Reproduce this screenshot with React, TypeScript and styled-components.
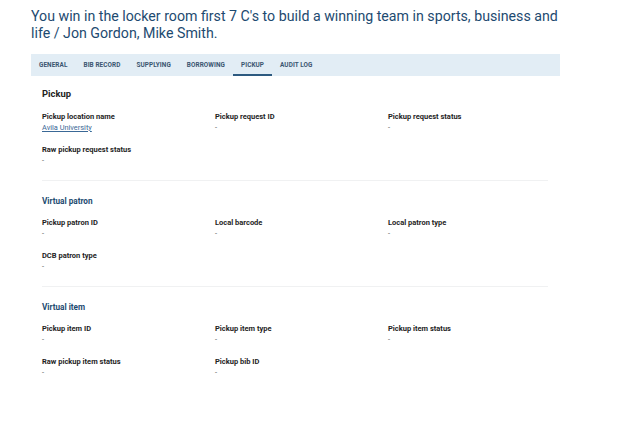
import React from "react";
import styled, { createGlobalStyle } from "styled-components";

const GlobalStyle = createGlobalStyle`
  html, body {
    margin: 0;
    padding: 0;
    background: #ffffff;
    font-family: Roboto, "Liberation Sans", Arial, sans-serif;
  }
`;

const Page = styled.div`
  width: 529px;
  padding: 8px 31px 0 31px;
`;

const Title = styled.h1`
  margin: 0;
  font-size: 14.2px;
  line-height: 17px;
  font-weight: 400;
  color: #1d4a70;
`;

const TabBar = styled.nav`
  display: flex;
  margin-top: 12px;
  height: 22px;
  background: #e2edf5;
`;

const Tab = styled.div<{ $active?: boolean }>`
  display: flex;
  align-items: center;
  padding: 1px 8px 0 8px;
  font-size: 6.4px;
  font-weight: 700;
  letter-spacing: 0.08px;
  color: #3a5570;
  text-transform: uppercase;
  box-sizing: border-box;
  border-bottom: 2px solid ${(p) => (p.$active ? "#2d5a80" : "transparent")};
`;

const Panel = styled.div`
  padding: 12px 12px 0 11px;
`;

const Section = styled.section<{ $last?: boolean }>`
  padding-bottom: 14px;
  border-bottom: 1px solid ${(p) => (p.$last ? "transparent" : "#f0f1f2")};
  & + & {
    padding-top: 15px;
  }
`;

const SectionTitle = styled.h2<{ $main?: boolean }>`
  margin: 0 0 12px 0;
  font-size: ${(p) => (p.$main ? "9.4px" : "8.2px")};
  line-height: ${(p) => (p.$main ? "12px" : "10px")};
  font-weight: 700;
  color: ${(p) => (p.$main ? "#222222" : "#1d4a70")};
`;

const FieldGrid = styled.div`
  display: grid;
  grid-template-columns: repeat(3, 160px);
  column-gap: 13px;
  row-gap: 12px;
`;

const Field = styled.div`
  display: flex;
  flex-direction: column;
`;

const Label = styled.div`
  font-size: 7.5px;
  line-height: 10px;
  font-weight: 700;
  color: #1e1e1e;
`;

const Value = styled.div`
  font-size: 7.4px;
  line-height: 11px;
  color: #555555;
`;

const ValueLink = styled.a`
  font-size: 7.4px;
  line-height: 11px;
  color: #3a6896;
  text-decoration: underline;
`;

type FieldDef = { label: string; value?: string; link?: boolean };

const sections: { title: string; main?: boolean; fields: FieldDef[] }[] = [
  {
    title: "Pickup",
    main: true,
    fields: [
      { label: "Pickup location name", value: "Avila University", link: true },
      { label: "Pickup request ID" },
      { label: "Pickup request status" },
      { label: "Raw pickup request status" },
    ],
  },
  {
    title: "Virtual patron",
    fields: [
      { label: "Pickup patron ID" },
      { label: "Local barcode" },
      { label: "Local patron type" },
      { label: "DCB patron type" },
    ],
  },
  {
    title: "Virtual item",
    fields: [
      { label: "Pickup item ID" },
      { label: "Pickup item type" },
      { label: "Pickup item status" },
      { label: "Raw pickup item status" },
      { label: "Pickup bib ID" },
    ],
  },
];

const tabs = ["General", "Bib record", "Supplying", "Borrowing", "Pickup", "Audit log"];

export default function App() {
  return (
    <>
      <GlobalStyle />
      <Page>
        <Title>
          You win in the locker room first 7 C's to build a winning team in sports, business and life / Jon
          Gordon, Mike Smith.
        </Title>
        <TabBar>
          {tabs.map((t) => (
            <Tab key={t} $active={t === "Pickup"}>
              {t}
            </Tab>
          ))}
        </TabBar>
        <Panel>
          {sections.map((s, i) => (
            <Section key={s.title} $last={i === sections.length - 1}>
              <SectionTitle $main={s.main}>{s.title}</SectionTitle>
              <FieldGrid>
                {s.fields.map((f) => (
                  <Field key={f.label}>
                    <Label>{f.label}</Label>
                    {f.link ? <ValueLink href="#">{f.value}</ValueLink> : <Value>{f.value ?? "-"}</Value>}
                  </Field>
                ))}
              </FieldGrid>
            </Section>
          ))}
        </Panel>
      </Page>
    </>
  );
}
